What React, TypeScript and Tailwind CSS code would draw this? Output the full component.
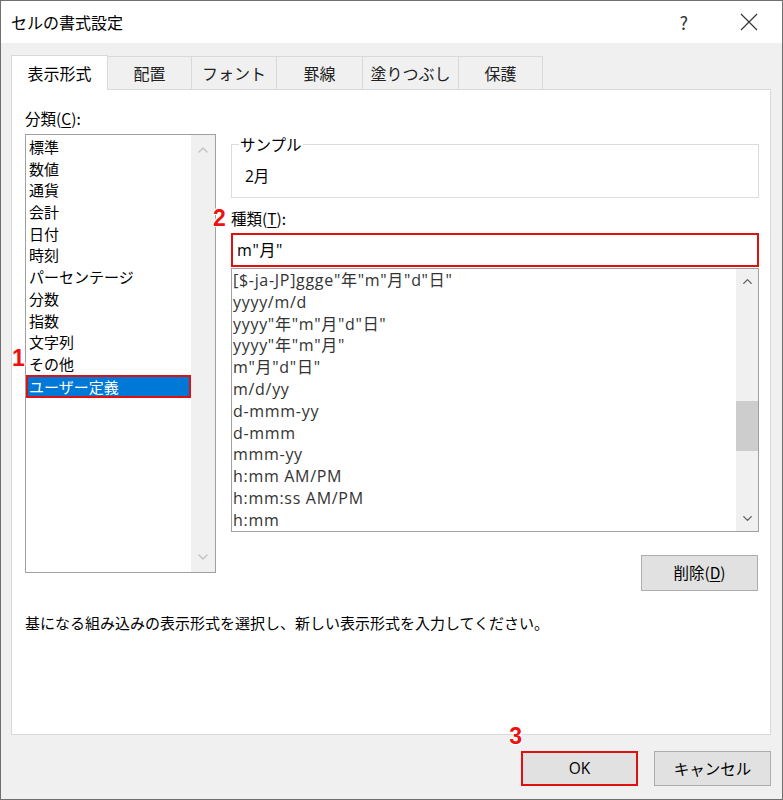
import { ChevronDown, ChevronUp } from "lucide-react";

const font = { fontFamily: '"Noto Sans CJK JP", "Noto Sans", sans-serif' };
const latin = { fontFamily: '"Open Sans", "Noto Sans CJK JP", sans-serif' };

const tabs = [
  { label: "表示形式", w: "w-[97px]" },
  { label: "配置", w: "w-[84px]" },
  { label: "フォント", w: "w-[85px]" },
  { label: "罫線", w: "w-[86px]" },
  { label: "塗りつぶし", w: "w-[96px]" },
  { label: "保護", w: "w-[84px]" },
];

const categories = [
  "標準",
  "数値",
  "通貨",
  "会計",
  "日付",
  "時刻",
  "パーセンテージ",
  "分数",
  "指数",
  "文字列",
  "その他",
  "ユーザー定義",
];

const formats = [
  '[$-ja-JP]ggge"年"m"月"d"日"',
  "yyyy/m/d",
  'yyyy"年"m"月"d"日"',
  'yyyy"年"m"月"',
  'm"月"d"日"',
  "m/d/yy",
  "d-mmm-yy",
  "d-mmm",
  "mmm-yy",
  "h:mm AM/PM",
  "h:mm:ss AM/PM",
  "h:mm",
];

// red step numbers laid over the dialog
const Step = ({ n, className }: { n: string; className: string }) => (
  <span
    className={`absolute text-[23px] font-bold leading-none text-[#ee1111] ${className}`}
    style={{
      fontFamily: '"Liberation Sans", Arial, sans-serif',
      textShadow:
        "1px 1px 0 #fff, -1px -1px 0 #fff, 1px -1px 0 #fff, -1px 1px 0 #fff",
    }}
  >
    {n}
  </span>
);

const App = () => {
  return (
    <div
      className="relative flex h-[800px] w-[783px] flex-col border border-[#707070] text-black"
      style={font}
    >
      {/* title bar */}
      <div className="flex h-[42px] shrink-0 items-center bg-white pl-[10px]">
        <span className="text-[16px] leading-none">セルの書式設定</span>
        <span className="ml-auto mr-[52px] text-[18px] leading-none text-[#333]">?</span>
        <svg className="mr-[24px]" width="18" height="18" viewBox="0 0 18 18">
          <path d="M1 1 L17 17 M17 1 L1 17" stroke="#333" strokeWidth="1.1" fill="none" />
        </svg>
      </div>

      <div className="flex flex-1 flex-col bg-[#f0f0f0] pl-[10px] pr-[11px]">
        {/* tabs */}
        <div className="mt-[11px] flex h-[35px] items-end">
          {tabs.map((t, i) =>
            i === 0 ? (
              <div
                key={t.label}
                className={`relative z-10 -mb-px flex h-[35px] ${t.w} items-center justify-center border border-b-0 border-[#d9d9d9] bg-white text-[16px]`}
              >
                {t.label}
              </div>
            ) : (
              <div
                key={t.label}
                className={`flex h-[33px] ${t.w} items-center justify-center border border-l-0 border-b-0 border-[#d9d9d9] bg-[#f0f0f0] text-[16px] text-[#222]`}
              >
                {t.label}
              </div>
            )
          )}
        </div>

        {/* tab panel */}
        <div className="flex h-[646px] flex-col border border-[#d9d9d9] bg-white pl-[13px] pr-[11px] pt-[18px]">
          <div className="flex gap-[15px]">
            {/* category column */}
            <div className="flex w-[191px] flex-col">
              <div className="h-[20px] text-[15.5px] leading-[20px]">
                分類(<span className="underline underline-offset-2">C</span>):
              </div>
              <div className="relative mt-[6px] flex h-[439px] border border-[#a0a0a0]">
                <div className="flex flex-1 flex-col pt-px">
                  {categories.map((c) =>
                    c === "ユーザー定義" ? (
                      <div
                        key={c}
                        className="h-[23px] border-2 border-[#e01010] bg-[#0078d7] pl-[1px] text-[15px] leading-[19px] text-white"
                      >
                        {c}
                      </div>
                    ) : (
                      <div key={c} className="h-[21.7px] pl-[3px] text-[15px] leading-[21.7px]">
                        {c}
                      </div>
                    )
                  )}
                </div>
                <div className="flex w-[24px] flex-col items-center justify-between bg-[#f0f0f0] py-[7px]">
                  <ChevronUp size={16} strokeWidth={2} color="#c2c2c2" />
                  <ChevronDown size={16} strokeWidth={2} color="#c2c2c2" />
                </div>
                <Step n="1" className="left-[-14px] top-[212px]" />
              </div>
            </div>

            {/* type column */}
            <div className="flex w-[528px] flex-col">
              <fieldset className="mt-[26px] h-[64px] border border-[#dcdcdc] pl-[13px]">
                <legend className="-ml-[6px] px-px text-[15.5px] leading-[20px]">サンプル</legend>
                <div className="mt-[12px] text-[15.5px] leading-[20px]" style={latin}>
                  2月
                </div>
              </fieldset>

              <div className="relative mt-[10px] h-[20px] text-[15.5px] leading-[20px]">
                種類(<span className="underline underline-offset-2">T</span>):
                <Step n="2" className="left-[-18px] top-[-1px]" />
              </div>
              <div
                className="mt-[5px] flex h-[34px] items-center border-2 border-[#e01010] pl-[4px] text-[16px] tracking-[0.6px]"
                style={latin}
              >
                m"月"
              </div>
              <div className="mt-px flex h-[264px] border border-[#a0a0a0]">
                <div className="flex flex-1 flex-col overflow-hidden pt-px" style={latin}>
                  {formats.map((f) => (
                    <div
                      key={f}
                      className="h-[21.8px] shrink-0 whitespace-nowrap pl-[1px] text-[16px] leading-[21.8px] tracking-[0.7px] text-[#333]"
                    >
                      {f}
                    </div>
                  ))}
                </div>
                <div className="flex w-[22px] flex-col items-center bg-[#f0f0f0] py-[5px]">
                  <ChevronUp size={15} strokeWidth={2.2} color="#606060" />
                  <div className="mt-[112px] h-[50px] w-full bg-[#cdcdcd]" />
                  <ChevronDown className="mt-auto" size={15} strokeWidth={2.2} color="#606060" />
                </div>
              </div>
              <button className="mr-px mt-[23px] h-[36px] w-[117px] self-end border border-[#adadad] bg-[#e1e1e1] text-[15.5px]">
                削除(<span className="underline underline-offset-2">D</span>)
              </button>
            </div>
          </div>

          <p className="mt-[22px] text-[15px] leading-[20px]">
            基になる組み込みの表示形式を選択し、新しい表示形式を入力してください。
          </p>
        </div>

        {/* footer buttons */}
        <div className="relative mt-[16px] flex justify-end gap-[16px]">
          <Step n="3" className="right-[249px] top-[-26px]" />
          <button className="h-[35px] w-[117px] border-2 border-[#e01010] bg-[#e1e1e1] text-[15.5px]" style={latin}>
            OK
          </button>
          <button className="h-[35px] w-[117px] border border-[#adadad] bg-[#e1e1e1] text-[15.5px]">
            キャンセル
          </button>
        </div>
      </div>
    </div>
  );
};

export default App;
